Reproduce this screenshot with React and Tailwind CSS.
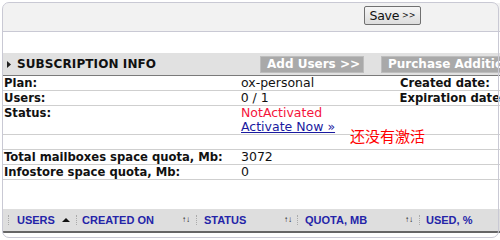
export default function App() {
  const rowCls = "flex h-[15px] border-b border-[#cfcfcf] items-center leading-[14px]";
  return (
    <div className="relative w-[500px] h-[240px] bg-white overflow-hidden" style={{ fontFamily: '"DejaVu Sans", Verdana, sans-serif' }}>
      <div className="absolute left-[2px] top-[2px] w-[497px] h-[236px] border border-[#c9c9d4] rounded-[7px] pointer-events-none" />
      <div className="ml-[3px] mt-[3px] w-[497px]">
        {/* top area */}
        <div className="h-[29px] bg-[#f2f2f2] border-b border-[#c9c9d4] rounded-tl-[6px] pl-[361px] pt-[3px]">
          <button className="w-[57px] h-[19px] border border-[#707070] rounded-[2px] bg-gradient-to-b from-[#f6f6f6] to-[#dcdcdc] text-[12.5px] leading-[16px] text-[#111] flex items-center justify-center gap-[3px]" style={{ fontFamily: '"DejaVu Sans", sans-serif' }}>
            <span className="tracking-[-0.3px]">Save</span><span className="text-[8px]">&gt;&gt;</span>
          </button>
        </div>
        <div className="h-[21px]" />
        {/* header bar */}
        <div className="h-[23px] bg-[#e1e1e1] border-b border-[#7a7a7a] flex items-center">
          <svg width="4" height="7" viewBox="0 0 4 7" className="ml-[4px] mr-[6px] shrink-0"><path d="M0 0 L4 3.5 L0 7 Z" fill="#222" /></svg>
          <span className="text-[12px] font-bold text-[#111] tracking-[0.1px] w-[243px] shrink-0 whitespace-nowrap">SUBSCRIPTION INFO</span>
          <div className="h-[17px] w-[104px] shrink-0 bg-[#a9a9a9] border border-[#bdbdbd] flex items-center pl-[6px] text-[12px] font-bold text-white whitespace-nowrap overflow-hidden">Add Users &gt;&gt;</div>
          <div className="ml-[17px] h-[17px] w-[130px] shrink-0 bg-[#a9a9a9] border border-[#bdbdbd] flex items-center pl-[6px] text-[12px] font-bold text-white whitespace-nowrap overflow-hidden">Purchase Additional</div>
        </div>
        {/* rows */}
        <div className="text-[12.5px] text-[#111]">
          <div className={rowCls}>
            <div className="w-[238px] pl-[1px] font-bold text-[11.6px]">Plan:</div>
            <div className="w-[159px]">ox-personal</div>
            <div className="font-bold whitespace-nowrap text-[11.6px]">Created date:</div>
          </div>
          <div className={rowCls}>
            <div className="w-[238px] pl-[1px] font-bold text-[11.6px]">Users:</div>
            <div className="w-[159px]">0 / 1</div>
            <div className="font-bold whitespace-nowrap text-[11.6px]">Expiration date</div>
          </div>
          <div className="flex h-[29px] border-b border-[#cfcfcf] leading-[14px]">
            <div className="w-[238px] pl-[1px] font-bold text-[11.6px]">Status:</div>
            <div className="w-[159px]">
              <div className="text-[#f5143c]">NotActivated</div>
              <div className="text-[#1a1aa0] underline whitespace-nowrap">Activate Now »</div>
            </div>
          </div>
          <div className={rowCls} />
          <div className={rowCls}>
            <div className="w-[238px] pl-[1px] font-bold whitespace-nowrap text-[11.6px]">Total mailboxes space quota, Mb:</div>
            <div className="w-[159px]">3072</div>
          </div>
          <div className={rowCls}>
            <div className="w-[238px] pl-[1px] font-bold whitespace-nowrap text-[11.6px]">Infostore space quota, Mb:</div>
            <div className="w-[159px]">0</div>
          </div>
        </div>
        <div className="h-[29px]" />
        {/* footer header */}
        <div className="h-[24px] bg-[#dedede] border-b-2 border-[#666] flex items-center text-[11px] font-bold text-[#2424a8]" style={{ fontFamily: '"Liberation Sans", Arial, sans-serif' }}>
          <span className="ml-[5px] h-[10px] border-l border-dotted border-[#aaa]" />
          <span className="ml-[8px] w-[45px]">USERS</span>
          <svg width="8" height="4" viewBox="0 0 8 4"><path d="M0 4 L4 0 L8 4 Z" fill="#111" /></svg>
          <span className="ml-[6px] h-[10px] border-l border-dotted border-[#aaa]" />
          <span className="ml-[5px] w-[100px]">CREATED ON</span>
          <span className="text-[8px] text-[#111] w-[9px]">↑↓</span>
          <span className="ml-[5px] h-[10px] border-l border-dotted border-[#aaa]" />
          <span className="ml-[7px] w-[80px]">STATUS</span>
          <span className="text-[8px] text-[#111] w-[9px]">↑↓</span>
          <span className="ml-[4px] h-[10px] border-l border-dotted border-[#aaa]" />
          <span className="ml-[7px] w-[100px]">QUOTA, MB</span>
          <span className="text-[8px] text-[#111] w-[9px]">↑↓</span>
          <span className="ml-[5px] h-[10px] border-l border-dotted border-[#aaa]" />
          <span className="ml-[6px]">USED, %</span>
        </div>
      </div>
      <div className="absolute left-[350px] top-[127px] text-[15px] leading-[18px] text-[#ff0000]" style={{ fontFamily: '"Noto Sans CJK SC", sans-serif' }}>还没有激活</div>
    </div>
  );
}
